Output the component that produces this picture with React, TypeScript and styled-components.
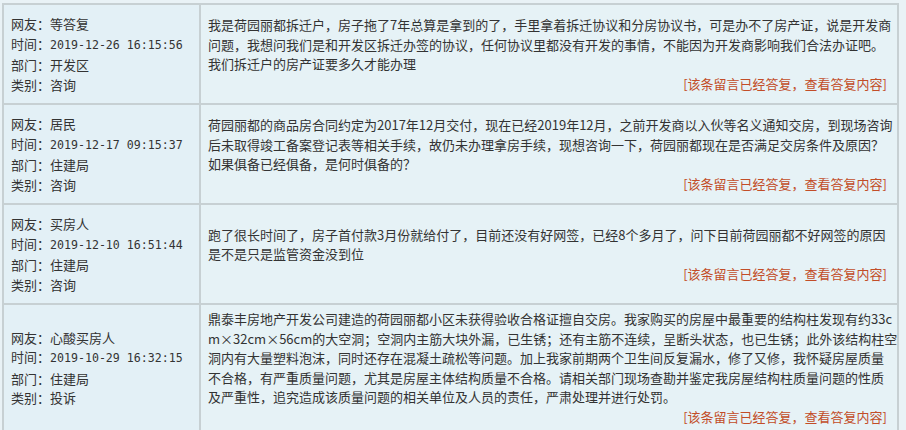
import React from "react";
import styled, { createGlobalStyle } from "styled-components";

const Global = createGlobalStyle`
  html, body { margin: 0; padding: 0; background: #e9f2f6; }
  body { font-family: "Noto Sans CJK SC", "Noto Sans", sans-serif; }
`;

const Page = styled.div`
  padding: 3px 0 0 2px;
`;

const Board = styled.div`
  display: grid;
  grid-template-columns: 197px 698px;
  width: max-content;
  border-top: 2px solid #c7d0d3;
  border-left: 2px solid #c7d0d3;
`;

const InfoCell = styled.div`
  background: #e3f0f6;
  border-right: 2px solid #c7d0d3;
  border-bottom: 2px solid #c7d0d3;
  padding: 9px 0 9px 7px;
  display: flex;
  flex-direction: column;
  justify-content: center;
  font-size: 13px;
  line-height: 19.5px;
  color: #333;
`;

const InfoLine = styled.div`
  white-space: nowrap;
`;

const Stamp = styled.span`
  font-family: "DejaVu Sans Mono", "Liberation Mono", monospace;
  font-size: 11.6px;
  color: #333;
`;

const BodyCell = styled.div`
  background: #e6f2f6;
  border-right: 2px solid #c7d0d3;
  border-bottom: 2px solid #c7d0d3;
  padding: 4px 8px 4px 7px;
  display: flex;
  flex-direction: column;
  justify-content: center;
  font-size: 13px;
  line-height: 19.5px;
  color: #333;
`;

const TextLine = styled.div`
  white-space: nowrap;
`;

const ReplyLink = styled.a`
  align-self: flex-end;
  color: #c24d28;
  text-decoration: none;
  white-space: nowrap;
  margin-right: 2px;
`;

type Msg = {
  user: string;
  time: string;
  dept: string;
  kind: string;
  lines: string[];
};

const msgs: Msg[] = [
  {
    user: "等答复",
    time: "2019-12-26 16:15:56",
    dept: "开发区",
    kind: "咨询",
    lines: [
      "我是荷园丽都拆迁户，房子拖了7年总算是拿到的了，手里拿着拆迁协议和分房协议书，可是办不了房产证，说是开发商",
      "问题，我想问我们是和开发区拆迁办签的协议，任何协议里都没有开发的事情，不能因为开发商影响我们合法办证吧。",
      "我们拆迁户的房产证要多久才能办理",
    ],
  },
  {
    user: "居民",
    time: "2019-12-17 09:15:37",
    dept: "住建局",
    kind: "咨询",
    lines: [
      "荷园丽都的商品房合同约定为2017年12月交付，现在已经2019年12月，之前开发商以入伙等名义通知交房，到现场咨询",
      "后未取得竣工备案登记表等相关手续，故仍未办理拿房手续，现想咨询一下，荷园丽都现在是否满足交房条件及原因？",
      "如果俱备已经俱备，是何时俱备的？",
    ],
  },
  {
    user: "买房人",
    time: "2019-12-10 16:51:44",
    dept: "住建局",
    kind: "咨询",
    lines: [
      "跑了很长时间了，房子首付款3月份就给付了，目前还没有好网签，已经8个多月了，问下目前荷园丽都不好网签的原因",
      "是不是只是监管资金没到位",
    ],
  },
  {
    user: "心酸买房人",
    time: "2019-10-29 16:32:15",
    dept: "住建局",
    kind: "投诉",
    lines: [
      "鼎泰丰房地产开发公司建造的荷园丽都小区未获得验收合格证擅自交房。我家购买的房屋中最重要的结构柱发现有约33c",
      "m×32cm×56cm的大空洞；空洞内主筋大块外漏，已生锈；还有主筋不连续，呈断头状态，也已生锈；此外该结构柱空",
      "洞内有大量塑料泡沫，同时还存在混凝土疏松等问题。加上我家前期两个卫生间反复漏水，修了又修，我怀疑房屋质量",
      "不合格，有严重质量问题，尤其是房屋主体结构质量不合格。请相关部门现场查勘并鉴定我房屋结构柱质量问题的性质",
      "及严重性，追究造成该质量问题的相关单位及人员的责任，严肃处理并进行处罚。",
    ],
  },
];

export default function App() {
  return (
    <Page>
      <Global />
      <Board>
        {msgs.map((m, i) => (
          <React.Fragment key={i}>
            <InfoCell>
              <InfoLine>网友：{m.user}</InfoLine>
              <InfoLine>
                时间：<Stamp>{m.time}</Stamp>
              </InfoLine>
              <InfoLine>部门：{m.dept}</InfoLine>
              <InfoLine>类别：{m.kind}</InfoLine>
            </InfoCell>
            <BodyCell>
              {m.lines.map((l, j) => (
                <TextLine key={j}>{l}</TextLine>
              ))}
              <ReplyLink href="#">[该条留言已经答复，查看答复内容]</ReplyLink>
            </BodyCell>
          </React.Fragment>
        ))}
      </Board>
    </Page>
  );
}
